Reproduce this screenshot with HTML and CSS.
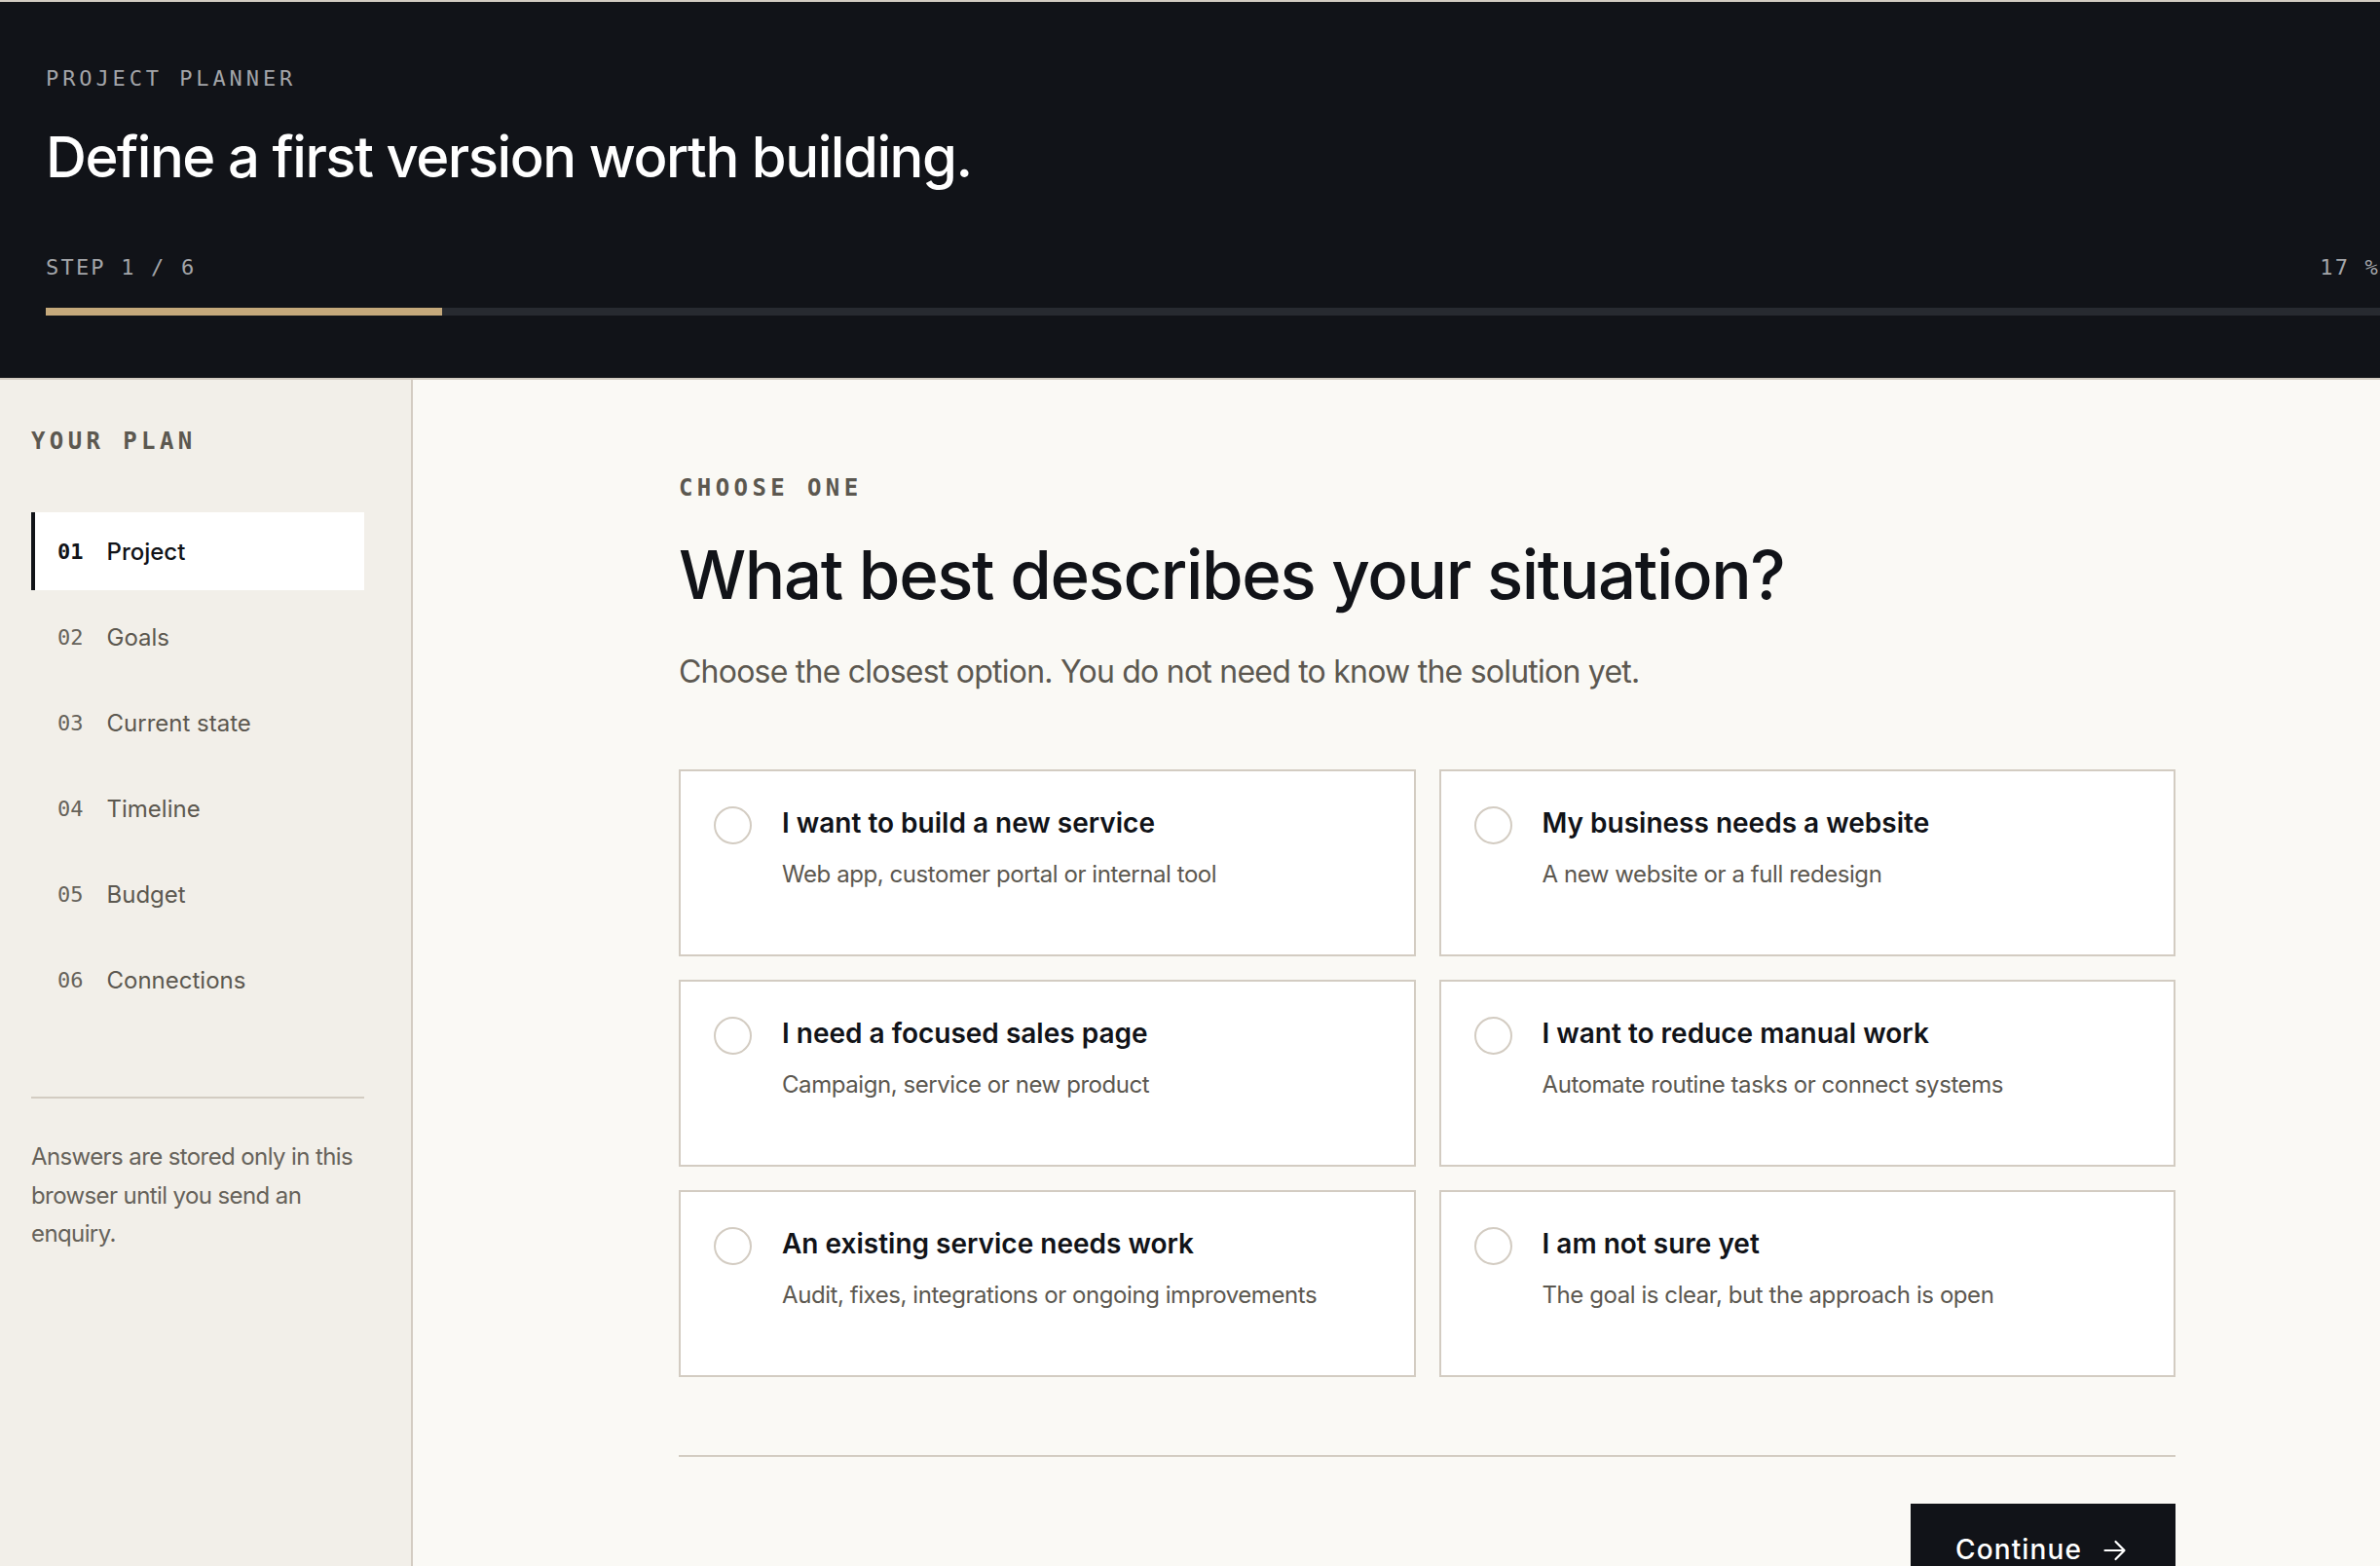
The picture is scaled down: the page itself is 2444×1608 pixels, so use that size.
FILE: index.html
```html
<!DOCTYPE html>
<html lang="en">
<head>
<meta charset="utf-8">
<title>Project planner</title>
<link rel="stylesheet" href="styles.css">
</head>
<body>
<div class="app">
  <header class="topbar">
    <p class="eyebrow">PROJECT PLANNER</p>
    <h1 class="hero-title">Define a first version worth building.</h1>
    <div class="progress-meta">
      <span>STEP 1 / 6</span>
      <span>17 %</span>
    </div>
    <div class="progress-track"><div class="progress-fill" style="width:17%"></div></div>
  </header>

  <div class="workspace">
    <aside class="sidebar">
      <h2 class="label">YOUR PLAN</h2>
      <ol class="steps">
        <li class="step is-active"><span class="step-num">01</span><span class="step-name">Project</span></li>
        <li class="step"><span class="step-num">02</span><span class="step-name">Goals</span></li>
        <li class="step"><span class="step-num">03</span><span class="step-name">Current state</span></li>
        <li class="step"><span class="step-num">04</span><span class="step-name">Timeline</span></li>
        <li class="step"><span class="step-num">05</span><span class="step-name">Budget</span></li>
        <li class="step"><span class="step-num">06</span><span class="step-name">Connections</span></li>
      </ol>
      <p class="sidebar-note">Answers are stored only in this browser until you send an enquiry.</p>
    </aside>

    <main class="main">
      <div class="main-inner">
        <p class="label">CHOOSE ONE</p>
        <h2 class="question">What best describes your situation?</h2>
        <p class="lead">Choose the closest option. You do not need to know the solution yet.</p>

        <div class="options">
          <label class="option">
            <span class="radio"></span>
            <span class="option-text">
              <span class="option-title">I want to build a new service</span>
              <span class="option-desc">Web app, customer portal or internal tool</span>
            </span>
          </label>
          <label class="option">
            <span class="radio"></span>
            <span class="option-text">
              <span class="option-title">My business needs a website</span>
              <span class="option-desc">A new website or a full redesign</span>
            </span>
          </label>
          <label class="option">
            <span class="radio"></span>
            <span class="option-text">
              <span class="option-title">I need a focused sales page</span>
              <span class="option-desc">Campaign, service or new product</span>
            </span>
          </label>
          <label class="option">
            <span class="radio"></span>
            <span class="option-text">
              <span class="option-title">I want to reduce manual work</span>
              <span class="option-desc">Automate routine tasks or connect systems</span>
            </span>
          </label>
          <label class="option">
            <span class="radio"></span>
            <span class="option-text">
              <span class="option-title">An existing service needs work</span>
              <span class="option-desc">Audit, fixes, integrations or ongoing improvements</span>
            </span>
          </label>
          <label class="option">
            <span class="radio"></span>
            <span class="option-text">
              <span class="option-title">I am not sure yet</span>
              <span class="option-desc">The goal is clear, but the approach is open</span>
            </span>
          </label>
        </div>

        <div class="actions">
          <button class="btn-primary" type="button">Continue
            <svg class="btn-arrow" viewBox="0 0 24 24" width="24" height="24" aria-hidden="true">
              <path d="M1.5 12H21.5M12.5 3L21.5 12L12.5 21" fill="none" stroke="currentColor" stroke-width="2.2" stroke-linecap="round" stroke-linejoin="round"/>
            </svg>
          </button>
        </div>
      </div>
    </main>
  </div>
</div>
</body>
</html>
```

FILE: styles.css
```css
* { box-sizing: border-box; }

html, body {
  margin: 0;
  padding: 0;
}

body {
  overflow: hidden;
  background: #faf9f5;
  font-family: Inter, "Noto Sans", sans-serif;
  color: #111318;
}

.app {
  border-top: 2px solid #d3ccc2;
  min-height: 100vh;
  display: flex;
  flex-direction: column;
}

/* ---------- top bar ---------- */
.topbar {
  background: #111318;
  padding: 66px 0 64px 47px;
  border-bottom: 2px solid #d3ccc2;
}

.eyebrow {
  margin: 0;
  font-family: "DejaVu Sans Mono", monospace;
  font-size: 22px;
  line-height: 26px;
  letter-spacing: 3.9px;
  color: #a3a5a9;
}

.hero-title {
  margin: 35px 0 0;
  font-size: 58px;
  line-height: 64px;
  font-weight: 500;
  letter-spacing: -0.025em;
  color: #ffffff;
}

.progress-meta {
  margin-top: 69px;
  display: flex;
  justify-content: space-between;
  font-family: "DejaVu Sans Mono", monospace;
  font-size: 22px;
  line-height: 26px;
  letter-spacing: 2.2px;
  color: #a3a5a9;
}

.progress-track {
  margin-top: 28px;
  height: 8px;
  background: #272a30;
}

.progress-fill {
  height: 100%;
  background: #c5a97b;
}

/* ---------- workspace ---------- */
.workspace {
  flex: 1;
  display: flex;
}

.sidebar {
  width: 424px;
  flex: none;
  background: #f2efe9;
  border-right: 2px solid #d3ccc2;
  padding: 49px 48px 0 32px;
}

.label {
  margin: 0;
  font-family: "DejaVu Sans Mono", monospace;
  font-weight: 700;
  font-size: 24px;
  line-height: 28px;
  letter-spacing: 4.4px;
  color: #5c5850;
}

.steps {
  list-style: none;
  margin: 59px 0 0;
  padding: 0;
  display: flex;
  flex-direction: column;
  gap: 8px;
}

.step {
  height: 80px;
  display: flex;
  align-items: center;
  gap: 24px;
  padding-left: 23px;
  border-left: 4px solid transparent;
}

.step.is-active {
  background: #ffffff;
  border-left-color: #111318;
}

.step-num {
  font-family: "DejaVu Sans Mono", monospace;
  font-size: 22px;
  color: #66625a;
}

.step-name {
  font-size: 24px;
  color: #5c5850;
}

.is-active .step-num {
  font-weight: 700;
  color: #111318;
}

.is-active .step-name {
  color: #111318;
  font-weight: 500;
}

.sidebar-note {
  margin: 80px 0 0;
  padding-top: 40px;
  border-top: 2px solid #d3ccc2;
  font-size: 24px;
  line-height: 39.5px;
  letter-spacing: -0.025em;
  color: #66625a;
}

/* ---------- main ---------- */
.main {
  flex: 1;
  padding: 97px 0 0 273px;
}

.main-inner {
  width: 1537px;
}

.question {
  margin: 37px 0 0;
  font-size: 69px;
  line-height: 76px;
  font-weight: 500;
  letter-spacing: -0.02em;
  color: #111318;
}

.lead {
  margin: 38px 0 0;
  font-size: 32px;
  line-height: 48px;
  letter-spacing: -0.024em;
  color: #5c5850;
}

.options {
  margin-top: 76px;
  display: grid;
  grid-template-columns: 1fr 1fr;
  gap: 24px;
}

.option {
  height: 192px;
  background: #ffffff;
  border: 2px solid #d3ccc2;
  padding: 36px 34px;
  display: flex;
  align-items: flex-start;
  gap: 31px;
  cursor: pointer;
}

.radio {
  flex: none;
  width: 39px;
  height: 39px;
  border: 2px solid #d3ccc2;
  border-radius: 50%;
}

.option-text {
  display: flex;
  flex-direction: column;
  gap: 18px;
}

.option-title {
  font-size: 28px;
  line-height: 35px;
  font-weight: 600;
  letter-spacing: 0;
  color: #111318;
}

.option-desc {
  font-size: 24px;
  line-height: 34px;
  letter-spacing: -0.018em;
  color: #5c5850;
}

.actions {
  margin-top: 80px;
  padding-top: 48px;
  border-top: 2px solid #d3ccc2;
  display: flex;
  justify-content: flex-end;
}

.btn-primary {
  display: inline-flex;
  align-items: center;
  gap: 22px;
  background: #111318;
  color: #ffffff;
  border: 0;
  border-radius: 0;
  padding: 28px 50px 28px 46px;
  font-family: Inter, sans-serif;
  font-size: 28px;
  line-height: 39px;
  font-weight: 500;
  letter-spacing: 0.04em;
  cursor: pointer;
}

.btn-arrow {
  display: block;
}
```
